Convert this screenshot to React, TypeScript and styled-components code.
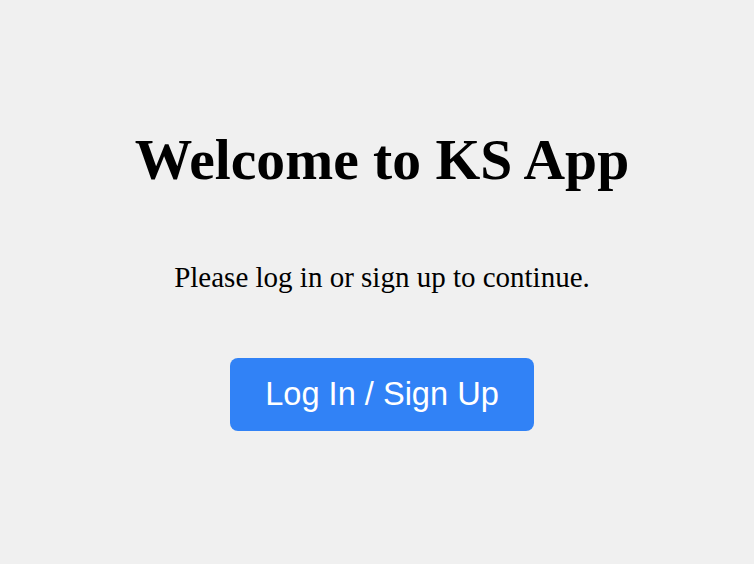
import React from "react";
import styled, { createGlobalStyle } from "styled-components";

const Global = createGlobalStyle`
  html, body { margin: 0; padding: 0; background: #f0f0f0; }
  body { font-family: "Liberation Serif", "Times New Roman", serif; }
`;

const Page = styled.main`
  min-height: 564px;
  display: flex;
  flex-direction: column;
  align-items: center;
  padding: 125px 0 0 10px;
  box-sizing: border-box;
`;

const Title = styled.h1`
  margin: 0;
  font-size: 57.6px;
  font-weight: bold;
  line-height: 1.2;
  color: #000;
`;

const Lead = styled.p`
  margin: 66px 0 0;
  font-size: 29px;
  line-height: 1.2;
  color: #000;
`;

const Button = styled.button`
  margin-top: 63px;
  width: 304px;
  height: 73px;
  border: none;
  border-radius: 8px;
  background: #3182f6;
  color: #fff;
  font-family: "Liberation Sans", Arial, sans-serif;
  font-size: 32.6px;
  cursor: pointer;
`;

export default function App() {
  return (
    <>
      <Global />
      <Page>
        <Title>Welcome to KS App</Title>
        <Lead>Please log in or sign up to continue.</Lead>
        <Button>Log In / Sign Up</Button>
      </Page>
    </>
  );
}
